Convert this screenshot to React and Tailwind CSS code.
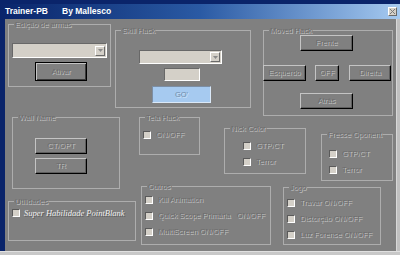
const dim = "text-[#6c6c6c] [text-shadow:1px_1px_0_#c2c2c2]";

function Group({ title, className, children }) {
  return (
    <div className={`relative shrink-0 border border-[#adadad] ${className}`}>
      <span className={`absolute left-[5px] top-[-5px] bg-[#808080] px-[1px] leading-[9px] whitespace-nowrap ${dim}`}>
        {title}
      </span>
      {children}
    </div>
  );
}

function Btn({ children, className }) {
  return (
    <div
      className={`flex shrink-0 items-center justify-center bg-[#808080] border border-t-[#c4c4c4] border-l-[#c4c4c4] border-b-black border-r-black shadow-[inset_-1px_-1px_0_#5e5e5e] ${dim} ${className}`}
    >
      {children}
    </div>
  );
}

function Check({ label }) {
  return (
    <div className="flex h-[8px] items-center gap-[5px] whitespace-nowrap">
      <span className="h-[8px] w-[8px] shrink-0 bg-[#d4d0c8] border border-t-[#5a5a5a] border-l-[#5a5a5a] border-b-white border-r-white" />
      <span className={dim}>{label}</span>
    </div>
  );
}

function Combo({ className }) {
  return (
    <div
      className={`flex shrink-0 items-center justify-end bg-[#d4d0c8] border border-t-[#686868] border-l-[#686868] border-b-white border-r-white pr-[1px] ${className}`}
    >
      <div className="flex h-[10px] w-[10px] items-center justify-center bg-[#d4d0c8] border border-t-white border-l-white border-b-[#6a6a6a] border-r-[#6a6a6a]">
        <svg width="5" height="3" viewBox="0 0 5 3">
          <path d="M0 0h5L2.5 3z" fill="#8a8a8a" />
        </svg>
      </div>
    </div>
  );
}

export default function App() {
  return (
    <div className="flex h-[255px] w-[400px] flex-col overflow-hidden bg-[#0a246a] font-['Liberation_Sans',Arial,sans-serif] text-[7.5px] leading-none">
      <div className="h-[4px] shrink-0" />
      <div className="flex h-[15px] shrink-0 items-center bg-linear-to-r from-[#0a246a] via-[#2a5aa4] to-[#a6caf0] pl-[5px] pr-[3px]">
        <span className="text-[8.5px] font-bold text-white">Trainer-PB</span>
        <span className="ml-[14px] text-[8.5px] font-bold text-white">By Mallesco</span>
        <div className="ml-auto flex h-[9px] w-[9px] items-center justify-center bg-[#d4d0c8] border border-t-white border-l-white border-b-[#6a6a6a] border-r-[#6a6a6a]">
          <svg width="5" height="5" viewBox="0 0 5 5">
            <path d="M0 0L5 5M5 0L0 5" stroke="#7a7a7a" strokeWidth="1" />
          </svg>
        </div>
      </div>
      <div className="flex flex-1">
        <div className="w-[5px] shrink-0" />
        <div className="flex flex-1 flex-col bg-[#808080] pt-[5px] border-r border-r-[#d8d8d8]">
          {/* row 1 */}
          <div className="flex h-[93px] shrink-0 items-start">
            <Group title="Edição de armas" className="ml-[3px] h-[63px] w-[103px]">
              <div className="flex flex-col items-start pl-[3px] pt-[18px]">
                <Combo className="h-[15px] w-[95px]" />
                <div
                  className={`ml-[23px] mt-[4px] flex h-[19px] w-[52px] items-center justify-center border border-black bg-[#808080] shadow-[inset_1px_1px_0_#c4c4c4,inset_-1px_-1px_0_#3a3a3a] ${dim}`}
                >
                  Ativar
                </div>
              </div>
            </Group>
            <Group title="Skill Hack" className="ml-[4px] mt-[6px] h-[78px] w-[136px]">
              <div className="flex flex-col items-start pt-[19px]">
                <Combo className="ml-[23px] h-[14px] w-[83px]" />
                <div className="ml-[48px] mt-[4px] h-[13px] w-[36px] bg-[#d4d0c8] border border-t-[#686868] border-l-[#686868] border-b-white border-r-white" />
                <div className="ml-[36px] mt-[5px] flex h-[17px] w-[59px] items-center justify-center bg-[#a6caf0] border border-t-[#7c8ea4] border-l-[#7c8ea4] border-b-[#dbe9f8] border-r-[#dbe9f8] text-[#6f8aa8] [text-shadow:1px_1px_0_#d0e4f8]">
                  GO'
                </div>
              </div>
            </Group>
            <Group title="Moved Hack" className="ml-[12px] mt-[6px] h-[86px] w-[130px]">
              <div className="flex flex-col items-start pt-[4px]">
                <Btn className="ml-[36px] h-[16px] w-[53px]">Frente</Btn>
                <div className="mt-[14px] flex">
                  <Btn className="ml-[-1px] h-[16px] w-[43px]">Esquerdo</Btn>
                  <Btn className="ml-[9px] h-[16px] w-[24px]">OFF</Btn>
                  <Btn className="ml-[10px] h-[16px] w-[42px]">Direita</Btn>
                </div>
                <Btn className="ml-[36px] mt-[12px] h-[16px] w-[53px]">Atrás</Btn>
              </div>
            </Group>
          </div>

          {/* row 2 */}
          <div className="flex h-[69px] shrink-0 items-start">
            <Group title="Wall Name" className="ml-[7px] h-[72px] w-[108px]">
              <div className="flex flex-col items-start pt-[20px]">
                <Btn className="ml-[22px] h-[16px] w-[52px]">CT/OPT</Btn>
                <Btn className="ml-[22px] mt-[4px] h-[16px] w-[52px]">TR</Btn>
              </div>
            </Group>
            <Group title="Tela Hack" className="ml-[19px] h-[38px] w-[61px]">
              <div className="flex flex-col pl-[3px] pt-[13px]">
                <Check label="ON/OFF" />
              </div>
            </Group>
            <Group title="Nick Color" className="ml-[24px] mt-[11px] h-[46px] w-[82px]">
              <div className="flex flex-col gap-[8px] pl-[18px] pt-[13px]">
                <Check label="GTP/CT" />
                <Check label="Terror" />
              </div>
            </Group>
            <Group title="Fresse Oponent" className="ml-[15px] mt-[17px] h-[47px] w-[72px]">
              <div className="flex flex-col gap-[8px] pl-[7px] pt-[15px]">
                <Check label="GTP/CT" />
                <Check label="Terror" />
              </div>
            </Group>
          </div>

          {/* row 3 */}
          <div className="flex shrink-0 items-start">
            <Group title="Utilidades" className="ml-[3px] mt-[15px] h-[40px] w-[128px]">
              <div className="flex h-[8px] items-center gap-[4px] pl-[3px] pt-[11px] whitespace-nowrap">
                <span className="h-[8px] w-[8px] shrink-0 bg-[#d4d0c8] border border-t-[#5a5a5a] border-l-[#5a5a5a] border-b-white border-r-white" />
                <span className="font-['Liberation_Serif',serif] text-[8.5px] italic text-[#f0f0f0] [text-shadow:1px_1px_0_#5a5a5a]">
                  Super Habilidade PointBlank
                </span>
              </div>
            </Group>
            <Group title="Outros" className="ml-[5px] h-[59px] w-[130px]">
              <div className="flex flex-col gap-[8px] pl-[3px] pt-[9px]">
                <Check label="Kill Animation" />
                <Check label={"Quick Scope Primária\u00a0\u00a0 ON/OFF"} />
                <Check label="MultiScreen ON/OFF" />
              </div>
            </Group>
            <Group title="Jogo" className="ml-[12px] mt-[1px] h-[58px] w-[98px]">
              <div className="flex flex-col gap-[8px] pl-[3px] pt-[11px]">
                <Check label="Travar ON/OFF" />
                <Check label="Distorção ON/OFF" />
                <Check label="Luz Forense ON/OFF" />
              </div>
            </Group>
          </div>
        </div>
        <div className="w-[3px] shrink-0 bg-[#c0c0c0]" />
      </div>
      <div className="h-[4px] shrink-0 bg-[#c8c8c8] border-t border-t-[#e0e0e0]" />
    </div>
  );
}
